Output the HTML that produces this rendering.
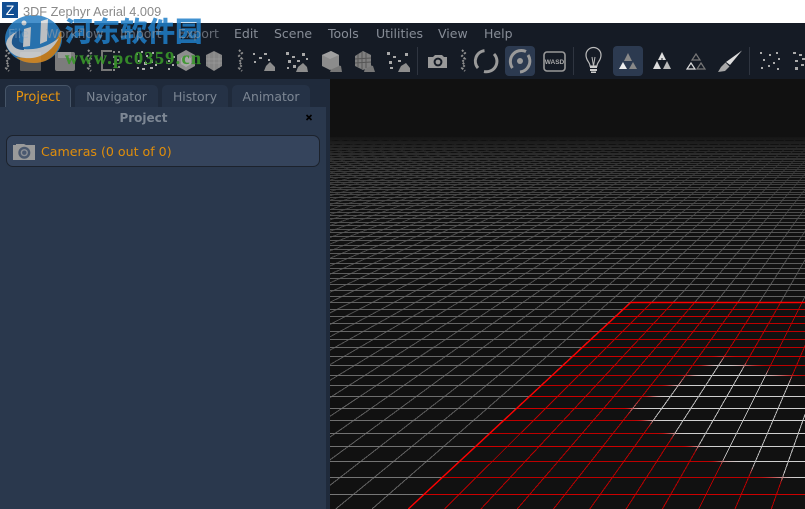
<!DOCTYPE html>
<html><head><meta charset="utf-8"><style>
html,body{margin:0;padding:0;width:805px;height:509px;overflow:hidden;background:#111}
#r{position:relative;width:805px;height:509px;overflow:hidden;font-family:"DejaVu Sans","Liberation Sans",sans-serif}
#r div,#r span{position:absolute;white-space:nowrap}
.m{top:26px;font-size:12.5px;line-height:15px;color:#878d97;z-index:2}
.u{color:rgba(150,156,166,.62)}
.t{top:85px;height:22px;background:#253246;border-radius:5px 5px 0 0;color:#7d8794;font-size:12.4px;line-height:24px;text-align:center}
svg{position:absolute;left:0;top:0}
</style></head><body><div id="r">
<div style="left:0;top:0;width:805px;height:23px;background:#fff"></div>
<div style="left:2px;top:2px;width:16px;height:16px;background:#124f93;color:#fff;font:14px/16px 'Liberation Sans',sans-serif;text-align:center">Z</div>
<div style="left:23px;top:4px;font:12.75px/16px 'Liberation Sans',sans-serif;color:#8a8a8a;z-index:2">3DF Zephyr Aerial 4.009</div>
<div style="left:0;top:23px;width:805px;height:56px;background:#151b25"></div>
<div class="m u" style="left:8px;color:rgba(150,175,200,.45)">File</div><div class="m u" style="left:46px">Workflow</div><div class="m u" style="left:120px">Import</div><div class="m u" style="left:178px">Export</div><div class="m" style="left:234px">Edit</div><div class="m" style="left:274px">Scene</div><div class="m" style="left:328px">Tools</div><div class="m" style="left:376px">Utilities</div><div class="m" style="left:438px">View</div><div class="m" style="left:484px">Help</div>

<div style="left:0;top:79px;width:330px;height:430px;background:#1f2a3b"></div>
<div style="left:0;top:107px;width:326px;height:402px;background:#2a384d"></div>
<div class="t" style="left:5px;width:64px;height:21px;background:#2a384d;border:1px solid #465568;border-bottom:0;color:#e8950f;font-size:13px">Project</div>
<div class="t" style="left:75px;width:83px">Navigator</div><div class="t" style="left:162px;width:66px">History</div><div class="t" style="left:232px;width:78px">Animator</div>
<div style="left:0;top:110px;width:287px;text-align:center;font-size:12px;line-height:17px;font-weight:bold;color:#7d8794"><span style="position:static">Project</span></div>
<div style="left:6px;top:135px;width:312px;height:30px;background:#35445c;border:1px solid #1c222c;border-radius:7px"></div>
<div style="left:41px;top:144px;font-size:12.6px;line-height:16px;color:#e08e0b">Cameras (0 out of 0)</div>

<svg width="805" height="509" viewBox="0 0 805 509" xmlns="http://www.w3.org/2000/svg">
<defs>
<linearGradient id="g" gradientUnits="userSpaceOnUse" x1="0" y1="137" x2="0" y2="509">
<stop offset="0" stop-color="#151515"/><stop offset=".03" stop-color="#262626"/><stop offset=".08" stop-color="#383838"/><stop offset=".17" stop-color="#484848"/><stop offset=".28" stop-color="#585858"/><stop offset=".44" stop-color="#626262"/><stop offset=".71" stop-color="#6e6e6e"/><stop offset="1" stop-color="#787878"/>
</linearGradient>
<clipPath id="cg"><polygon points="330,130 805,130 805,302 630.7,302 408.3,509 330,509"/></clipPath>
<clipPath id="cr"><polygon points="630.7,302 805,302 805,509 408.3,509"/></clipPath>
<clipPath id="cv"><rect x="330" y="79" width="475" height="430"/></clipPath>
<filter id="b" x="-20%" y="-20%" width="140%" height="140%"><feGaussianBlur stdDeviation="3"/></filter>
<mask id="w" maskUnits="userSpaceOnUse" x="560" y="320" width="320" height="200"><polygon fill="#fff" filter="url(#b)" points="721,358 790,378 850,395 850,505 782,479 723,463 697,448 628,410"/></mask>
<path id="h" fill="none" d="M330 494.5H805M330 477.5H805M330 461.5H805M330 446.5H805M330 433.5H805M330 420.5H805M330 408.5H805M330 396.5H805M330 385.5H805M330 375.5H805M330 365.5H805M330 356.5H805M330 347.5H805M330 339.5H805M330 331.5H805M330 323.5H805M330 316.5H805M330 309.5H805M330 302.5H805M330 296.5H805M330 290.5H805M330 284.5H805M330 278.5H805M330 273.5H805M330 268.5H805M330 263.5H805M330 258.5H805M330 253.5H805M330 249.5H805M330 245.5H805M330 240.5H805M330 236.5H805M330 232.5H805M330 229.5H805M330 225.5H805M330 222.5H805M330 218.5H805M330 215.5H805M330 212.5H805M330 209.5H805M330 205.5H805M330 203.5H805M330 200.5H805M330 197.5H805M330 194.5H805M330 192.5H805M330 189.5H805M330 187.5H805M330 184.5H805M330 182.5H805M330 180.5H805M330 177.5H805M330 175.5H805M330 173.5H805M330 171.5H805M330 169.5H805M330 167.5H805M330 165.5H805M330 163.5H805M330 161.5H805M330 159.5H805M330 158.5H805M330 156.5H805M330 154.5H805M330 153.5H805M330 151.5H805M330 149.5H805M330 148.5H805M330 146.5H805M330 145.5H805M330 143.5H805M330 142.5H805M330 141.5H805M330 139.5H805M330 138.5H805M330 137.5H805"/>
<path id="d" fill="none" d="M-1406.7 509L327.5 137M-1370.4 509L337.1 137M-1334.1 509L346.7 137M-1297.8 509L356.3 137M-1261.5 509L365.9 137M-1225.2 509L375.6 137M-1188.9 509L385.2 137M-1152.6 509L394.8 137M-1116.3 509L404.4 137M-1080 509L414 137M-1043.7 509L423.6 137M-1007.4 509L433.2 137M-971.1 509L442.8 137M-934.8 509L452.4 137M-898.5 509L462 137M-862.2 509L471.7 137M-825.9 509L481.3 137M-789.6 509L490.9 137M-753.3 509L500.5 137M-717 509L510.1 137M-680.7 509L519.7 137M-644.4 509L529.3 137M-608.1 509L538.9 137M-571.8 509L548.5 137M-535.5 509L558.1 137M-499.2 509L567.8 137M-462.9 509L577.4 137M-426.6 509L587 137M-390.3 509L596.6 137M-354 509L606.2 137M-317.7 509L615.8 137M-281.4 509L625.4 137M-245.1 509L635 137M-208.8 509L644.6 137M-172.5 509L654.2 137M-136.2 509L663.9 137M-99.9 509L673.5 137M-63.6 509L683.1 137M-27.3 509L692.7 137M9 509L702.3 137M45.3 509L711.9 137M81.6 509L721.5 137M117.9 509L731.1 137M154.2 509L740.7 137M190.5 509L750.3 137M226.8 509L760 137M263.1 509L769.6 137M299.4 509L779.2 137M335.7 509L788.8 137M372 509L798.4 137M408.3 509L808 137M444.6 509L817.6 137M480.9 509L827.2 137M517.2 509L836.8 137M553.5 509L846.4 137M589.8 509L856.1 137M626.1 509L865.7 137M662.4 509L875.3 137M698.7 509L884.9 137M735 509L894.5 137M771.3 509L904.1 137M807.6 509L913.7 137"/>
</defs>
<g clip-path="url(#cv)" shape-rendering="crispEdges">
<g clip-path="url(#cg)">
<use href="#h" stroke="url(#g)"/>
<use href="#d" stroke="url(#g)" stroke-opacity=".8"/>
</g>
<g clip-path="url(#cr)">
<use href="#d" stroke="#b80000"/>
<path fill="none" stroke="#cc0000" d="M408 494.5H805M408 446.5H805M408 408.5H805M408 396.5H805M408 356.5H805M408 316.5H805"/>
<path fill="none" stroke="#bc0000" d="M408 477.5H805M408 461.5H805M408 433.5H805M408 420.5H805M408 385.5H805M408 375.5H805M408 365.5H805M408 347.5H805M408 339.5H805M408 331.5H805M408 323.5H805M408 309.5H805"/>
</g>
<g mask="url(#w)">
<use href="#h" stroke="#d0d0d0"/>
<use href="#d" stroke="#bcbcbc"/>
</g>
</g>
<g clip-path="url(#cv)">
<path fill="none" stroke="#f00" stroke-width="1.4" d="M408.3 509L630.7 302.5H805"/>
</g>

<!-- toolbar -->
<g fill="none" stroke="#8e8e8e" stroke-width="2" stroke-dasharray="2 1.6">
<path d="M6 50l3 3-3 3 3 3-3 3 3 3-3 3 3 3"/><path d="M88 50l3 3-3 3 3 3-3 3 3 3-3 3 3 3"/><path d="M239 50l3 3-3 3 3 3-3 3 3 3-3 3 3 3"/><path d="M462 50l3 3-3 3 3 3-3 3 3 3-3 3 3 3"/>
</g>
<g fill="#2f3540" stroke="none"><rect x="417" y="47" width="1" height="28"/><rect x="573" y="47" width="1" height="28"/><rect x="749" y="47" width="1" height="28"/></g>
<rect x="505" y="46" width="30" height="30" rx="4" fill="#2c3a50"/>
<rect x="613" y="46" width="30" height="30" rx="4" fill="#2c3a50"/>
<rect x="20" y="52" width="21" height="19" rx="1" fill="#555"/>
<rect x="55" y="52" width="20" height="19" rx="2" fill="#7c7c7c"/><rect x="58" y="52" width="13" height="6" fill="#999"/>
<path d="M112 51h-10v19h10" fill="none" stroke="#777" stroke-width="2"/>
<g fill="#888"><rect x="113" y="51" width="2" height="2"/><rect x="118" y="51" width="2" height="2"/><rect x="113" y="56" width="2" height="2"/><rect x="117" y="59" width="2" height="2"/><rect x="113" y="63" width="2" height="2"/><rect x="118" y="66" width="2" height="2"/><rect x="113" y="69" width="2" height="2"/></g>
<g fill="#aaa"><rect x="136" y="53" width="2" height="2"/><rect x="141" y="51" width="2" height="2"/><rect x="146" y="55" width="2" height="2"/><rect x="152" y="52" width="2" height="2"/><rect x="138" y="60" width="3" height="2"/><rect x="144" y="62" width="3" height="3"/><rect x="150" y="60" width="3" height="3"/><rect x="155" y="64" width="2" height="2"/><rect x="137" y="67" width="2" height="2"/><rect x="142" y="68" width="3" height="2"/><rect x="150" y="67" width="3" height="2"/><rect x="168" y="60" width="2" height="2"/><rect x="172" y="64" width="2" height="2"/><rect x="168" y="68" width="2" height="2"/><rect x="173" y="56" width="2" height="2"/></g>
<polygon points="186,50 195,55 195,66 186,71 177,66 177,55" fill="#8d8d8d"/><polygon points="186,55 191,58 191,64 186,67 181,64 181,58" fill="#a8a8a8"/>
<polygon points="214,51 222,55 222,66 214,71 206,66 206,55" fill="#858585"/><path d="M209 54v14M214 52v18M219 54v14M206 59h16M206 63h16" stroke="#a0a0a0" fill="none" stroke-width=".6"/>
<g fill="#a8a8a8"><rect x="253" y="53" width="2" height="2"/><rect x="259" y="57" width="3" height="2"/><rect x="254" y="61" width="2" height="2"/><rect x="264" y="53" width="3" height="2"/><rect x="268" y="59" width="2" height="2"/><rect x="286" y="52" width="3" height="3"/><rect x="292" y="56" width="3" height="2"/><rect x="302" y="53" width="3" height="3"/><rect x="288" y="60" width="3" height="3"/><rect x="297" y="60" width="3" height="2"/><rect x="306" y="58" width="2" height="2"/><rect x="293" y="65" width="3" height="3"/><rect x="287" y="67" width="2" height="2"/><rect x="387" y="52" width="3" height="3"/><rect x="393" y="56" width="3" height="2"/><rect x="405" y="53" width="3" height="3"/><rect x="389" y="61" width="3" height="3"/><rect x="398" y="60" width="3" height="2"/><rect x="390" y="67" width="3" height="2"/></g>
<path d="M266 66l4-4 5 5 0 4h-11z" fill="#8d8d8d"/><path d="M298 67l5-4 4 4 1 5h-12z" fill="#8d8d8d"/><path d="M333 64l8 2 1 6h-12z" fill="#777"/><path d="M366 64l7 2 2 6h-11z" fill="#777"/><path d="M401 66l5-3 4 5v4h-12z" fill="#8d8d8d"/>
<polygon points="322,55 331,51 339,55 339,66 330,70 322,66" fill="#8c8c8c"/><polygon points="322,55 331,51 339,55 330,59" fill="#a0a0a0"/>
<polygon points="355,56 363,51 371,55 371,66 363,70 355,66" fill="#7f7f7f"/><path d="M358 54v13M362 52v17M366 53v15M355 59l16-1M355 63l16-1" stroke="#555" fill="none"/>
<path d="M428 57h5l2-2h7l2 2h3v11h-19z" fill="#999"/><circle cx="438" cy="62" r="4.4" fill="#151b25"/><circle cx="438" cy="62" r="2.4" fill="#999"/>
<g fill="none" stroke="#9a9a9a" stroke-width="3"><path d="M484.5 50.6A10.5 10.5 0 0 0 478 68"/><path d="M494 54A10.5 10.5 0 0 1 484 71.5"/></g>
<g fill="none" stroke="#9a9a9a" stroke-width="3"><path d="M526 51.5A11 11 0 0 0 512.5 68"/><path d="M528 55A11 11 0 0 1 520 72"/></g><circle cx="520" cy="61" r="3" fill="#9a9a9a"/>
<rect x="544" y="52" width="21" height="19" rx="3" fill="none" stroke="#999" stroke-width="1.6"/>
<text x="554.5" y="64" text-anchor="middle" font-family="Liberation Sans,sans-serif" font-size="6.5" font-weight="bold" fill="#aaa">WASD</text>
<path d="M590 66c0-4-4-5-4-11a7.5 7.5 0 0 1 15 0c0 6-4 7-4 11z" fill="none" stroke="#bbb" stroke-width="1.2"/><path d="M592 57l1.5 9M595 57l-1.5 9" stroke="#bbb" fill="none"/><rect x="590" y="66" width="7" height="2" fill="#ccc"/><rect x="590" y="69" width="7" height="2" fill="#ccc"/><rect x="591" y="71.5" width="5" height="1.5" fill="#ccc"/>
<polygon points="628,53 632,61 624,61" fill="#888"/><polygon points="623,62 627,69 619,69" fill="#eee"/><polygon points="633,62 637,69 629,69" fill="#888"/>
<polygon points="662,52 666,60 658,60" fill="#ddd"/><polygon points="657,61 661,69 653,69" fill="#ddd"/><polygon points="667,61 671,69 663,69" fill="#bbb"/><rect x="661.5" y="58" width="1" height="11" fill="#151b25"/>
<g fill="none" stroke-width="1.2"><polygon points="696,54 700,60 692,60" stroke="#777"/><polygon points="691,63 695,69 687,69" stroke="#ddd"/><polygon points="701,63 705,69 697,69" stroke="#777"/></g>
<path d="M742 50.5L730 65 726 62z" fill="#ddd"/><path d="M725.5 62.5L729.5 66.5 725 71 718 72 721 67z" fill="#a8a8a8"/>
<g fill="#aaa"><rect x="760" y="52" width="2" height="2"/><rect x="769" y="54" width="2" height="2"/><rect x="776" y="52" width="2" height="2"/><rect x="763" y="59" width="2" height="2"/><rect x="773" y="62" width="2" height="2"/><rect x="778" y="58" width="2" height="2"/><rect x="761" y="67" width="2" height="2"/><rect x="768" y="65" width="2" height="2"/><rect x="777" y="68" width="2" height="2"/><rect x="793" y="52" width="3" height="2"/><rect x="799" y="54" width="3" height="2"/><rect x="795" y="60" width="3" height="2"/><rect x="802" y="58" width="3" height="2"/><rect x="795" y="67" width="3" height="3"/><rect x="801" y="64" width="3" height="2"/></g>

<!-- panel icons -->
<path d="M13 145h3v-1h8l2 1h9v15h-22z" fill="#9a9a9a"/><circle cx="24.3" cy="152.7" r="6" fill="#4a586e"/><circle cx="24.3" cy="152.7" r="3.6" fill="#8b8f96"/><circle cx="24.3" cy="152.7" r="2.2" fill="#4a5870"/>
<path d="M306.5 115l5 5M311.5 115l-5 5" stroke="#000" stroke-width="1.6"/>

<!-- watermark -->
<g opacity=".86">
<ellipse cx="33.5" cy="39" rx="28.5" ry="24" fill="#2a80c4"/>
<path d="M61 30c3 14-6 33-27 33-8 0-14-2-18-6 16 3 36-4 45-27z" fill="#d98a20"/>
<path d="M6 44c3 10 12 15 26 14 10-1 20-7 27-20-8 6-16 10-26 11-12 1-16-1-16-9 0-4 1-7 3-9-8 2-13 6-14 13z" fill="#d8dadc"/>
<path d="M20 30c-6 3-9 9-8 14 2 4 6 6 12 6l-1-7c-2 0-4-1-4-3 0-3 1-6 3-8z" fill="#1f5f9c"/>
<path d="M24 29l7-2-1 19-7 1zM41 21l7-2-1 22-7 3z" fill="#d8dadc"/>
<circle cx="24" cy="23" r="2.5" fill="#d8dadc"/>
</g>
<text x="65" y="41" font-family="Noto Sans CJK SC,sans-serif" font-size="27.5" font-weight="900" fill="#1e7ec8" fill-opacity=".85">河东软件园</text>
<text x="65" y="64" font-family="Liberation Serif,serif" font-size="18" font-weight="bold" fill="#38962a" fill-opacity=".9" stroke="#38962a" stroke-width=".2" textLength="136">www.pc0359.cn</text>
</svg>
</div></body></html>
